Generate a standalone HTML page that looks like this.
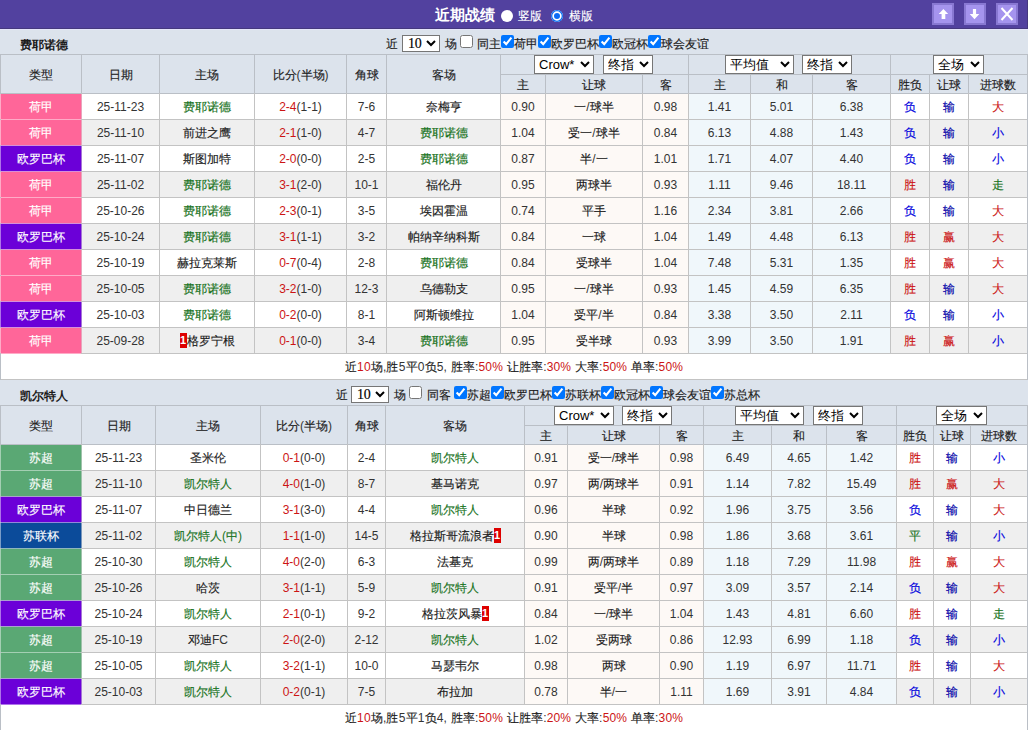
<!DOCTYPE html><html><head><meta charset="utf-8"><style>
html,body{margin:0;padding:0;}
body{width:1030px;height:730px;overflow:hidden;position:relative;background:#fff;font-family:"Liberation Sans",sans-serif;font-size:12px;color:#333;}
div{position:absolute;box-sizing:content-box;}
.t{text-align:center;white-space:nowrap;overflow:visible;color:#333;}
.t>.c{color:#1c1c1c;}
.t.w>.c{color:inherit;}
.c{-webkit-text-stroke-width:0.15px;}
.b .c{-webkit-text-stroke-width:0;}
.rc{display:inline-block;width:7px;height:15px;line-height:15px;vertical-align:top;margin-top:4px;background:#dd0000;color:#fff;font-weight:bold;font-size:11px;text-align:center;-webkit-text-stroke-width:0;}
select{position:absolute;margin:0;box-sizing:border-box;background:#fff;color:#000;}
.n10{font-family:"Liberation Serif",serif;font-size:14px;line-height:17px;height:17px;color:#000;letter-spacing:-0.2px;-webkit-text-stroke:0.15px #000;}
.s10{width:38px;height:17px;font-family:"Liberation Serif",serif;font-size:13px;padding:0 0 0 1px;letter-spacing:0.5px;-webkit-text-stroke:0.2px #000;}
.hs{height:19px;font-family:"Liberation Sans",sans-serif;font-size:13px;}
.btn{width:18px;height:18px;background:#a594ee;border:2px solid #8878d2;}
</style></head><body><div style="left:0px;top:0px;width:1027px;height:28px;background:#52419f;border-right:1px solid #45387e;border-bottom:1px solid #45387e"></div><div style="left:0px;top:29px;width:1028px;height:1px;background:#e4e4fa;"></div><div class="t b w" style="left:435px;top:0px;width:70px;height:29px;line-height:29px;color:#fff;font-weight:bold;font-size:15px;text-align:left"><span class="c">近期战绩</span></div><div class="t w" style="left:518px;top:2px;width:40px;height:29px;line-height:29px;color:#fff;text-align:left"><span class="c">竖版</span></div><div class="t w" style="left:569px;top:2px;width:40px;height:29px;line-height:29px;color:#fff;text-align:left"><span class="c">横版</span></div><div style="left:501px;top:10px;width:12px;height:12px;border-radius:50%;background:#fff"></div><div style="left:551px;top:10px;width:12px;height:12px;border-radius:50%;background:#0b6cf6;box-shadow:inset 0 0 0 1.3px #1270f0, inset 0 0 0 3px #fff"></div><div class="btn" style="left:932px;top:3px"><svg width="18" height="18" style="position:absolute;left:0;top:0"><path d="M9.4 3.9 L14.2 8.9 L11.3 8.9 L11.3 14 L7.6 14 L7.6 8.9 L4.7 8.9 Z" fill="#fff"/></svg></div><div class="btn" style="left:964px;top:3px"><svg width="18" height="18" style="position:absolute;left:0;top:0"><path d="M8.5 14.2 L13.3 9.1 L10.1 9.1 L10.1 3.9 L6.9 3.9 L6.9 9.1 L3.7 9.1 Z" fill="#fff"/></svg></div><div class="btn" style="left:996px;top:3px"><svg width="18" height="18" style="position:absolute;left:0;top:0"><path d="M3.5 3 L14.5 15 M14.5 3 L3.5 15" stroke="#fff" stroke-width="2" fill="none"/></svg></div><div style="left:0px;top:30px;width:1028px;height:349px;background:#dce3ec;"></div><div class="t b" style="left:20px;top:34px;width:100px;height:22px;line-height:22px;font-weight:bold;text-align:left;color:#222"><span class="c">费耶诺德</span></div><div class="t " style="left:386px;top:34px;width:16px;height:20px;line-height:20px;text-align:left"><span class="c">近</span></div><select class="s10" style="left:402px;top:35px"><option></option></select><div class="n10" style="left:408px;top:35px">10</div><div class="t " style="left:445px;top:34px;width:16px;height:20px;line-height:20px;text-align:left"><span class="c">场</span></div><input type="checkbox"  style="position:absolute;left:460px;top:35px;margin:0;width:13px;height:13px"><div class="t " style="left:477px;top:34px;width:28px;height:20px;line-height:20px;text-align:left"><span class="c">同主</span></div><input type="checkbox" checked style="position:absolute;left:501px;top:35px;margin:0;width:13px;height:13px"><div class="t " style="left:514px;top:34px;width:28px;height:20px;line-height:20px;text-align:left"><span class="c">荷甲</span></div><input type="checkbox" checked style="position:absolute;left:538px;top:35px;margin:0;width:13px;height:13px"><div class="t " style="left:551px;top:34px;width:52px;height:20px;line-height:20px;text-align:left"><span class="c">欧罗巴杯</span></div><input type="checkbox" checked style="position:absolute;left:599px;top:35px;margin:0;width:13px;height:13px"><div class="t " style="left:612px;top:34px;width:40px;height:20px;line-height:20px;text-align:left"><span class="c">欧冠杯</span></div><input type="checkbox" checked style="position:absolute;left:648px;top:35px;margin:0;width:13px;height:13px"><div class="t " style="left:661px;top:34px;width:52px;height:20px;line-height:20px;text-align:left"><span class="c">球会友谊</span></div><select class="hs" style="left:534px;top:55px;width:60px"><option>Crow*</option></select><select class="hs" style="left:603px;top:55px;width:50px"><option>终指</option></select><select class="hs" style="left:725px;top:55px;width:69px"><option>平均值</option></select><select class="hs" style="left:802px;top:55px;width:50px"><option>终指</option></select><select class="hs" style="left:933px;top:55px;width:51px"><option>全场</option></select><div style="left:1px;top:94px;width:1026px;height:25px;background:#ffffff;"></div><div style="left:1px;top:94px;width:80px;height:25px;background:#ff6699;"></div><div style="left:501px;top:94px;width:187px;height:25px;background:#fdf9f6;"></div><div style="left:689px;top:94px;width:201px;height:25px;background:#f0f7fb;"></div><div style="left:1px;top:120px;width:1026px;height:25px;background:#efefef;"></div><div style="left:1px;top:120px;width:80px;height:25px;background:#ff6699;"></div><div style="left:501px;top:120px;width:187px;height:25px;background:#fdf9f6;"></div><div style="left:689px;top:120px;width:201px;height:25px;background:#f0f7fb;"></div><div style="left:1px;top:146px;width:1026px;height:25px;background:#ffffff;"></div><div style="left:1px;top:146px;width:80px;height:25px;background:#6b00d8;"></div><div style="left:501px;top:146px;width:187px;height:25px;background:#fdf9f6;"></div><div style="left:689px;top:146px;width:201px;height:25px;background:#f0f7fb;"></div><div style="left:1px;top:172px;width:1026px;height:25px;background:#efefef;"></div><div style="left:1px;top:172px;width:80px;height:25px;background:#ff6699;"></div><div style="left:501px;top:172px;width:187px;height:25px;background:#fdf9f6;"></div><div style="left:689px;top:172px;width:201px;height:25px;background:#f0f7fb;"></div><div style="left:1px;top:198px;width:1026px;height:25px;background:#ffffff;"></div><div style="left:1px;top:198px;width:80px;height:25px;background:#ff6699;"></div><div style="left:501px;top:198px;width:187px;height:25px;background:#fdf9f6;"></div><div style="left:689px;top:198px;width:201px;height:25px;background:#f0f7fb;"></div><div style="left:1px;top:224px;width:1026px;height:25px;background:#efefef;"></div><div style="left:1px;top:224px;width:80px;height:25px;background:#6b00d8;"></div><div style="left:501px;top:224px;width:187px;height:25px;background:#fdf9f6;"></div><div style="left:689px;top:224px;width:201px;height:25px;background:#f0f7fb;"></div><div style="left:1px;top:250px;width:1026px;height:25px;background:#ffffff;"></div><div style="left:1px;top:250px;width:80px;height:25px;background:#ff6699;"></div><div style="left:501px;top:250px;width:187px;height:25px;background:#fdf9f6;"></div><div style="left:689px;top:250px;width:201px;height:25px;background:#f0f7fb;"></div><div style="left:1px;top:276px;width:1026px;height:25px;background:#efefef;"></div><div style="left:1px;top:276px;width:80px;height:25px;background:#ff6699;"></div><div style="left:501px;top:276px;width:187px;height:25px;background:#fdf9f6;"></div><div style="left:689px;top:276px;width:201px;height:25px;background:#f0f7fb;"></div><div style="left:1px;top:302px;width:1026px;height:25px;background:#ffffff;"></div><div style="left:1px;top:302px;width:80px;height:25px;background:#6b00d8;"></div><div style="left:501px;top:302px;width:187px;height:25px;background:#fdf9f6;"></div><div style="left:689px;top:302px;width:201px;height:25px;background:#f0f7fb;"></div><div style="left:1px;top:328px;width:1026px;height:25px;background:#efefef;"></div><div style="left:1px;top:328px;width:80px;height:25px;background:#ff6699;"></div><div style="left:501px;top:328px;width:187px;height:25px;background:#fdf9f6;"></div><div style="left:689px;top:328px;width:201px;height:25px;background:#f0f7fb;"></div><div style="left:1px;top:354px;width:1026px;height:25px;background:#ffffff;"></div><div style="left:0px;top:54px;width:1028px;height:1px;background:#babfc6;"></div><div style="left:500px;top:74px;width:528px;height:1px;background:#babfc6;"></div><div style="left:0px;top:93px;width:1028px;height:1px;background:#babfc6;"></div><div style="left:0px;top:119px;width:1028px;height:1px;background:#c3c3c3;"></div><div style="left:0px;top:145px;width:1028px;height:1px;background:#c3c3c3;"></div><div style="left:0px;top:171px;width:1028px;height:1px;background:#c3c3c3;"></div><div style="left:0px;top:197px;width:1028px;height:1px;background:#c3c3c3;"></div><div style="left:0px;top:223px;width:1028px;height:1px;background:#c3c3c3;"></div><div style="left:0px;top:249px;width:1028px;height:1px;background:#c3c3c3;"></div><div style="left:0px;top:275px;width:1028px;height:1px;background:#c3c3c3;"></div><div style="left:0px;top:301px;width:1028px;height:1px;background:#c3c3c3;"></div><div style="left:0px;top:327px;width:1028px;height:1px;background:#c3c3c3;"></div><div style="left:0px;top:353px;width:1028px;height:1px;background:#c3c3c3;"></div><div style="left:0px;top:379px;width:1028px;height:1px;background:#c3c3c3;"></div><div style="left:0px;top:54px;width:1px;height:326px;background:#babfc6;"></div><div style="left:81px;top:54px;width:1px;height:40px;background:#babfc6;"></div><div style="left:81px;top:93px;width:1px;height:261px;background:#c3c3c3;"></div><div style="left:159px;top:54px;width:1px;height:40px;background:#babfc6;"></div><div style="left:159px;top:93px;width:1px;height:261px;background:#c3c3c3;"></div><div style="left:254px;top:54px;width:1px;height:40px;background:#babfc6;"></div><div style="left:254px;top:93px;width:1px;height:261px;background:#c3c3c3;"></div><div style="left:346px;top:54px;width:1px;height:40px;background:#babfc6;"></div><div style="left:346px;top:93px;width:1px;height:261px;background:#c3c3c3;"></div><div style="left:386px;top:54px;width:1px;height:40px;background:#babfc6;"></div><div style="left:386px;top:93px;width:1px;height:261px;background:#c3c3c3;"></div><div style="left:500px;top:54px;width:1px;height:40px;background:#babfc6;"></div><div style="left:500px;top:93px;width:1px;height:261px;background:#c3c3c3;"></div><div style="left:545px;top:74px;width:1px;height:20px;background:#babfc6;"></div><div style="left:545px;top:93px;width:1px;height:261px;background:#c3c3c3;"></div><div style="left:642px;top:74px;width:1px;height:20px;background:#babfc6;"></div><div style="left:642px;top:93px;width:1px;height:261px;background:#c3c3c3;"></div><div style="left:688px;top:54px;width:1px;height:40px;background:#babfc6;"></div><div style="left:688px;top:93px;width:1px;height:261px;background:#c3c3c3;"></div><div style="left:750px;top:74px;width:1px;height:20px;background:#babfc6;"></div><div style="left:750px;top:93px;width:1px;height:261px;background:#c3c3c3;"></div><div style="left:812px;top:74px;width:1px;height:20px;background:#babfc6;"></div><div style="left:812px;top:93px;width:1px;height:261px;background:#c3c3c3;"></div><div style="left:890px;top:54px;width:1px;height:40px;background:#babfc6;"></div><div style="left:890px;top:93px;width:1px;height:261px;background:#c3c3c3;"></div><div style="left:929px;top:74px;width:1px;height:20px;background:#babfc6;"></div><div style="left:929px;top:93px;width:1px;height:261px;background:#c3c3c3;"></div><div style="left:968px;top:74px;width:1px;height:20px;background:#babfc6;"></div><div style="left:968px;top:93px;width:1px;height:261px;background:#c3c3c3;"></div><div style="left:1027px;top:54px;width:1px;height:326px;background:#babfc6;"></div><div style="left:0px;top:94px;width:1px;height:25px;background:#ffabc7;"></div><div style="left:81px;top:94px;width:1px;height:25px;background:#e9a4bb;"></div><div style="left:0px;top:120px;width:1px;height:25px;background:#ffabc7;"></div><div style="left:81px;top:120px;width:1px;height:25px;background:#e9a4bb;"></div><div style="left:1px;top:119px;width:80px;height:1px;background:#ffabc7;"></div><div style="left:0px;top:146px;width:1px;height:25px;background:#ae73ea;"></div><div style="left:81px;top:146px;width:1px;height:25px;background:#a676d7;"></div><div style="left:1px;top:145px;width:80px;height:1px;background:#d68fd8;"></div><div style="left:0px;top:172px;width:1px;height:25px;background:#ffabc7;"></div><div style="left:81px;top:172px;width:1px;height:25px;background:#e9a4bb;"></div><div style="left:1px;top:171px;width:80px;height:1px;background:#d68fd8;"></div><div style="left:0px;top:198px;width:1px;height:25px;background:#ffabc7;"></div><div style="left:81px;top:198px;width:1px;height:25px;background:#e9a4bb;"></div><div style="left:1px;top:197px;width:80px;height:1px;background:#ffabc7;"></div><div style="left:0px;top:224px;width:1px;height:25px;background:#ae73ea;"></div><div style="left:81px;top:224px;width:1px;height:25px;background:#a676d7;"></div><div style="left:1px;top:223px;width:80px;height:1px;background:#d68fd8;"></div><div style="left:0px;top:250px;width:1px;height:25px;background:#ffabc7;"></div><div style="left:81px;top:250px;width:1px;height:25px;background:#e9a4bb;"></div><div style="left:1px;top:249px;width:80px;height:1px;background:#d68fd8;"></div><div style="left:0px;top:276px;width:1px;height:25px;background:#ffabc7;"></div><div style="left:81px;top:276px;width:1px;height:25px;background:#e9a4bb;"></div><div style="left:1px;top:275px;width:80px;height:1px;background:#ffabc7;"></div><div style="left:0px;top:302px;width:1px;height:25px;background:#ae73ea;"></div><div style="left:81px;top:302px;width:1px;height:25px;background:#a676d7;"></div><div style="left:1px;top:301px;width:80px;height:1px;background:#d68fd8;"></div><div style="left:0px;top:328px;width:1px;height:25px;background:#ffabc7;"></div><div style="left:81px;top:328px;width:1px;height:25px;background:#e9a4bb;"></div><div style="left:1px;top:327px;width:80px;height:1px;background:#d68fd8;"></div><div style="left:1px;top:353px;width:80px;height:1px;background:#ffabc7;"></div><div class="t " style="left:1px;top:56px;width:80px;height:38px;line-height:38px;"><span class="c">类型</span></div><div class="t " style="left:82px;top:56px;width:77px;height:38px;line-height:38px;"><span class="c">日期</span></div><div class="t " style="left:160px;top:56px;width:94px;height:38px;line-height:38px;"><span class="c">主场</span></div><div class="t " style="left:255px;top:56px;width:91px;height:38px;line-height:38px;"><span class="c">比分</span>(<span class="c">半场</span>)</div><div class="t " style="left:347px;top:56px;width:39px;height:38px;line-height:38px;"><span class="c">角球</span></div><div class="t " style="left:387px;top:56px;width:113px;height:38px;line-height:38px;"><span class="c">客场</span></div><div class="t " style="left:501px;top:76px;width:44px;height:18px;line-height:18px;"><span class="c">主</span></div><div class="t " style="left:546px;top:76px;width:96px;height:18px;line-height:18px;"><span class="c">让球</span></div><div class="t " style="left:643px;top:76px;width:45px;height:18px;line-height:18px;"><span class="c">客</span></div><div class="t " style="left:689px;top:76px;width:61px;height:18px;line-height:18px;"><span class="c">主</span></div><div class="t " style="left:751px;top:76px;width:61px;height:18px;line-height:18px;"><span class="c">和</span></div><div class="t " style="left:813px;top:76px;width:77px;height:18px;line-height:18px;"><span class="c">客</span></div><div class="t " style="left:891px;top:76px;width:38px;height:18px;line-height:18px;"><span class="c">胜负</span></div><div class="t " style="left:930px;top:76px;width:38px;height:18px;line-height:18px;"><span class="c">让球</span></div><div class="t " style="left:969px;top:76px;width:58px;height:18px;line-height:18px;"><span class="c">进球数</span></div><div class="t w" style="left:1px;top:95px;width:80px;height:25px;line-height:25px;color:#fff"><span class="c">荷甲</span></div><div class="t " style="left:82px;top:95px;width:77px;height:25px;line-height:25px;">25-11-23</div><div class="t " style="left:160px;top:95px;width:94px;height:25px;line-height:25px;"><span style="color:#18731d"><span class="c">费耶诺德</span></span></div><div class="t " style="left:255px;top:95px;width:91px;height:25px;line-height:25px;"><span style="color:#cc1414">2-4</span>(1-1)</div><div class="t " style="left:347px;top:95px;width:39px;height:25px;line-height:25px;">7-6</div><div class="t " style="left:387px;top:95px;width:113px;height:25px;line-height:25px;"><span class="c">奈梅亨</span></div><div class="t " style="left:501px;top:95px;width:44px;height:25px;line-height:25px;">0.90</div><div class="t " style="left:546px;top:95px;width:96px;height:25px;line-height:25px;"><span class="c">一</span>/<span class="c">球半</span></div><div class="t " style="left:643px;top:95px;width:45px;height:25px;line-height:25px;">0.98</div><div class="t " style="left:689px;top:95px;width:61px;height:25px;line-height:25px;">1.41</div><div class="t " style="left:751px;top:95px;width:61px;height:25px;line-height:25px;">5.01</div><div class="t " style="left:813px;top:95px;width:77px;height:25px;line-height:25px;">6.38</div><div class="t " style="left:891px;top:95px;width:38px;height:25px;line-height:25px;"><span style="color:#0000dd"><span class="c">负</span></span></div><div class="t " style="left:930px;top:95px;width:38px;height:25px;line-height:25px;"><span style="color:#0000a8"><span class="c">输</span></span></div><div class="t " style="left:969px;top:95px;width:58px;height:25px;line-height:25px;"><span style="color:#cc1414"><span class="c">大</span></span></div><div class="t w" style="left:1px;top:121px;width:80px;height:25px;line-height:25px;color:#fff"><span class="c">荷甲</span></div><div class="t " style="left:82px;top:121px;width:77px;height:25px;line-height:25px;">25-11-10</div><div class="t " style="left:160px;top:121px;width:94px;height:25px;line-height:25px;"><span class="c">前进之鹰</span></div><div class="t " style="left:255px;top:121px;width:91px;height:25px;line-height:25px;"><span style="color:#cc1414">2-1</span>(1-0)</div><div class="t " style="left:347px;top:121px;width:39px;height:25px;line-height:25px;">4-7</div><div class="t " style="left:387px;top:121px;width:113px;height:25px;line-height:25px;"><span style="color:#18731d"><span class="c">费耶诺德</span></span></div><div class="t " style="left:501px;top:121px;width:44px;height:25px;line-height:25px;">1.04</div><div class="t " style="left:546px;top:121px;width:96px;height:25px;line-height:25px;"><span class="c">受一</span>/<span class="c">球半</span></div><div class="t " style="left:643px;top:121px;width:45px;height:25px;line-height:25px;">0.84</div><div class="t " style="left:689px;top:121px;width:61px;height:25px;line-height:25px;">6.13</div><div class="t " style="left:751px;top:121px;width:61px;height:25px;line-height:25px;">4.88</div><div class="t " style="left:813px;top:121px;width:77px;height:25px;line-height:25px;">1.43</div><div class="t " style="left:891px;top:121px;width:38px;height:25px;line-height:25px;"><span style="color:#0000dd"><span class="c">负</span></span></div><div class="t " style="left:930px;top:121px;width:38px;height:25px;line-height:25px;"><span style="color:#0000a8"><span class="c">输</span></span></div><div class="t " style="left:969px;top:121px;width:58px;height:25px;line-height:25px;"><span style="color:#0000dd"><span class="c">小</span></span></div><div class="t w" style="left:1px;top:147px;width:80px;height:25px;line-height:25px;color:#fff"><span class="c">欧罗巴杯</span></div><div class="t " style="left:82px;top:147px;width:77px;height:25px;line-height:25px;">25-11-07</div><div class="t " style="left:160px;top:147px;width:94px;height:25px;line-height:25px;"><span class="c">斯图加特</span></div><div class="t " style="left:255px;top:147px;width:91px;height:25px;line-height:25px;"><span style="color:#cc1414">2-0</span>(0-0)</div><div class="t " style="left:347px;top:147px;width:39px;height:25px;line-height:25px;">2-5</div><div class="t " style="left:387px;top:147px;width:113px;height:25px;line-height:25px;"><span style="color:#18731d"><span class="c">费耶诺德</span></span></div><div class="t " style="left:501px;top:147px;width:44px;height:25px;line-height:25px;">0.87</div><div class="t " style="left:546px;top:147px;width:96px;height:25px;line-height:25px;"><span class="c">半</span>/<span class="c">一</span></div><div class="t " style="left:643px;top:147px;width:45px;height:25px;line-height:25px;">1.01</div><div class="t " style="left:689px;top:147px;width:61px;height:25px;line-height:25px;">1.71</div><div class="t " style="left:751px;top:147px;width:61px;height:25px;line-height:25px;">4.07</div><div class="t " style="left:813px;top:147px;width:77px;height:25px;line-height:25px;">4.40</div><div class="t " style="left:891px;top:147px;width:38px;height:25px;line-height:25px;"><span style="color:#0000dd"><span class="c">负</span></span></div><div class="t " style="left:930px;top:147px;width:38px;height:25px;line-height:25px;"><span style="color:#0000a8"><span class="c">输</span></span></div><div class="t " style="left:969px;top:147px;width:58px;height:25px;line-height:25px;"><span style="color:#0000dd"><span class="c">小</span></span></div><div class="t w" style="left:1px;top:173px;width:80px;height:25px;line-height:25px;color:#fff"><span class="c">荷甲</span></div><div class="t " style="left:82px;top:173px;width:77px;height:25px;line-height:25px;">25-11-02</div><div class="t " style="left:160px;top:173px;width:94px;height:25px;line-height:25px;"><span style="color:#18731d"><span class="c">费耶诺德</span></span></div><div class="t " style="left:255px;top:173px;width:91px;height:25px;line-height:25px;"><span style="color:#cc1414">3-1</span>(2-0)</div><div class="t " style="left:347px;top:173px;width:39px;height:25px;line-height:25px;">10-1</div><div class="t " style="left:387px;top:173px;width:113px;height:25px;line-height:25px;"><span class="c">福伦丹</span></div><div class="t " style="left:501px;top:173px;width:44px;height:25px;line-height:25px;">0.95</div><div class="t " style="left:546px;top:173px;width:96px;height:25px;line-height:25px;"><span class="c">两球半</span></div><div class="t " style="left:643px;top:173px;width:45px;height:25px;line-height:25px;">0.93</div><div class="t " style="left:689px;top:173px;width:61px;height:25px;line-height:25px;">1.11</div><div class="t " style="left:751px;top:173px;width:61px;height:25px;line-height:25px;">9.46</div><div class="t " style="left:813px;top:173px;width:77px;height:25px;line-height:25px;">18.11</div><div class="t " style="left:891px;top:173px;width:38px;height:25px;line-height:25px;"><span style="color:#cc1414"><span class="c">胜</span></span></div><div class="t " style="left:930px;top:173px;width:38px;height:25px;line-height:25px;"><span style="color:#0000a8"><span class="c">输</span></span></div><div class="t " style="left:969px;top:173px;width:58px;height:25px;line-height:25px;"><span style="color:#18731d"><span class="c">走</span></span></div><div class="t w" style="left:1px;top:199px;width:80px;height:25px;line-height:25px;color:#fff"><span class="c">荷甲</span></div><div class="t " style="left:82px;top:199px;width:77px;height:25px;line-height:25px;">25-10-26</div><div class="t " style="left:160px;top:199px;width:94px;height:25px;line-height:25px;"><span style="color:#18731d"><span class="c">费耶诺德</span></span></div><div class="t " style="left:255px;top:199px;width:91px;height:25px;line-height:25px;"><span style="color:#cc1414">2-3</span>(0-1)</div><div class="t " style="left:347px;top:199px;width:39px;height:25px;line-height:25px;">3-5</div><div class="t " style="left:387px;top:199px;width:113px;height:25px;line-height:25px;"><span class="c">埃因霍温</span></div><div class="t " style="left:501px;top:199px;width:44px;height:25px;line-height:25px;">0.74</div><div class="t " style="left:546px;top:199px;width:96px;height:25px;line-height:25px;"><span class="c">平手</span></div><div class="t " style="left:643px;top:199px;width:45px;height:25px;line-height:25px;">1.16</div><div class="t " style="left:689px;top:199px;width:61px;height:25px;line-height:25px;">2.34</div><div class="t " style="left:751px;top:199px;width:61px;height:25px;line-height:25px;">3.81</div><div class="t " style="left:813px;top:199px;width:77px;height:25px;line-height:25px;">2.66</div><div class="t " style="left:891px;top:199px;width:38px;height:25px;line-height:25px;"><span style="color:#0000dd"><span class="c">负</span></span></div><div class="t " style="left:930px;top:199px;width:38px;height:25px;line-height:25px;"><span style="color:#0000a8"><span class="c">输</span></span></div><div class="t " style="left:969px;top:199px;width:58px;height:25px;line-height:25px;"><span style="color:#cc1414"><span class="c">大</span></span></div><div class="t w" style="left:1px;top:225px;width:80px;height:25px;line-height:25px;color:#fff"><span class="c">欧罗巴杯</span></div><div class="t " style="left:82px;top:225px;width:77px;height:25px;line-height:25px;">25-10-24</div><div class="t " style="left:160px;top:225px;width:94px;height:25px;line-height:25px;"><span style="color:#18731d"><span class="c">费耶诺德</span></span></div><div class="t " style="left:255px;top:225px;width:91px;height:25px;line-height:25px;"><span style="color:#cc1414">3-1</span>(1-1)</div><div class="t " style="left:347px;top:225px;width:39px;height:25px;line-height:25px;">3-2</div><div class="t " style="left:387px;top:225px;width:113px;height:25px;line-height:25px;"><span class="c">帕纳辛纳科斯</span></div><div class="t " style="left:501px;top:225px;width:44px;height:25px;line-height:25px;">0.84</div><div class="t " style="left:546px;top:225px;width:96px;height:25px;line-height:25px;"><span class="c">一球</span></div><div class="t " style="left:643px;top:225px;width:45px;height:25px;line-height:25px;">1.04</div><div class="t " style="left:689px;top:225px;width:61px;height:25px;line-height:25px;">1.49</div><div class="t " style="left:751px;top:225px;width:61px;height:25px;line-height:25px;">4.48</div><div class="t " style="left:813px;top:225px;width:77px;height:25px;line-height:25px;">6.13</div><div class="t " style="left:891px;top:225px;width:38px;height:25px;line-height:25px;"><span style="color:#cc1414"><span class="c">胜</span></span></div><div class="t " style="left:930px;top:225px;width:38px;height:25px;line-height:25px;"><span style="color:#cc1414"><span class="c">赢</span></span></div><div class="t " style="left:969px;top:225px;width:58px;height:25px;line-height:25px;"><span style="color:#cc1414"><span class="c">大</span></span></div><div class="t w" style="left:1px;top:251px;width:80px;height:25px;line-height:25px;color:#fff"><span class="c">荷甲</span></div><div class="t " style="left:82px;top:251px;width:77px;height:25px;line-height:25px;">25-10-19</div><div class="t " style="left:160px;top:251px;width:94px;height:25px;line-height:25px;"><span class="c">赫拉克莱斯</span></div><div class="t " style="left:255px;top:251px;width:91px;height:25px;line-height:25px;"><span style="color:#cc1414">0-7</span>(0-4)</div><div class="t " style="left:347px;top:251px;width:39px;height:25px;line-height:25px;">2-8</div><div class="t " style="left:387px;top:251px;width:113px;height:25px;line-height:25px;"><span style="color:#18731d"><span class="c">费耶诺德</span></span></div><div class="t " style="left:501px;top:251px;width:44px;height:25px;line-height:25px;">0.84</div><div class="t " style="left:546px;top:251px;width:96px;height:25px;line-height:25px;"><span class="c">受球半</span></div><div class="t " style="left:643px;top:251px;width:45px;height:25px;line-height:25px;">1.04</div><div class="t " style="left:689px;top:251px;width:61px;height:25px;line-height:25px;">7.48</div><div class="t " style="left:751px;top:251px;width:61px;height:25px;line-height:25px;">5.31</div><div class="t " style="left:813px;top:251px;width:77px;height:25px;line-height:25px;">1.35</div><div class="t " style="left:891px;top:251px;width:38px;height:25px;line-height:25px;"><span style="color:#cc1414"><span class="c">胜</span></span></div><div class="t " style="left:930px;top:251px;width:38px;height:25px;line-height:25px;"><span style="color:#cc1414"><span class="c">赢</span></span></div><div class="t " style="left:969px;top:251px;width:58px;height:25px;line-height:25px;"><span style="color:#cc1414"><span class="c">大</span></span></div><div class="t w" style="left:1px;top:277px;width:80px;height:25px;line-height:25px;color:#fff"><span class="c">荷甲</span></div><div class="t " style="left:82px;top:277px;width:77px;height:25px;line-height:25px;">25-10-05</div><div class="t " style="left:160px;top:277px;width:94px;height:25px;line-height:25px;"><span style="color:#18731d"><span class="c">费耶诺德</span></span></div><div class="t " style="left:255px;top:277px;width:91px;height:25px;line-height:25px;"><span style="color:#cc1414">3-2</span>(1-0)</div><div class="t " style="left:347px;top:277px;width:39px;height:25px;line-height:25px;">12-3</div><div class="t " style="left:387px;top:277px;width:113px;height:25px;line-height:25px;"><span class="c">乌德勒支</span></div><div class="t " style="left:501px;top:277px;width:44px;height:25px;line-height:25px;">0.95</div><div class="t " style="left:546px;top:277px;width:96px;height:25px;line-height:25px;"><span class="c">一</span>/<span class="c">球半</span></div><div class="t " style="left:643px;top:277px;width:45px;height:25px;line-height:25px;">0.93</div><div class="t " style="left:689px;top:277px;width:61px;height:25px;line-height:25px;">1.45</div><div class="t " style="left:751px;top:277px;width:61px;height:25px;line-height:25px;">4.59</div><div class="t " style="left:813px;top:277px;width:77px;height:25px;line-height:25px;">6.35</div><div class="t " style="left:891px;top:277px;width:38px;height:25px;line-height:25px;"><span style="color:#cc1414"><span class="c">胜</span></span></div><div class="t " style="left:930px;top:277px;width:38px;height:25px;line-height:25px;"><span style="color:#0000a8"><span class="c">输</span></span></div><div class="t " style="left:969px;top:277px;width:58px;height:25px;line-height:25px;"><span style="color:#cc1414"><span class="c">大</span></span></div><div class="t w" style="left:1px;top:303px;width:80px;height:25px;line-height:25px;color:#fff"><span class="c">欧罗巴杯</span></div><div class="t " style="left:82px;top:303px;width:77px;height:25px;line-height:25px;">25-10-03</div><div class="t " style="left:160px;top:303px;width:94px;height:25px;line-height:25px;"><span style="color:#18731d"><span class="c">费耶诺德</span></span></div><div class="t " style="left:255px;top:303px;width:91px;height:25px;line-height:25px;"><span style="color:#cc1414">0-2</span>(0-0)</div><div class="t " style="left:347px;top:303px;width:39px;height:25px;line-height:25px;">8-1</div><div class="t " style="left:387px;top:303px;width:113px;height:25px;line-height:25px;"><span class="c">阿斯顿维拉</span></div><div class="t " style="left:501px;top:303px;width:44px;height:25px;line-height:25px;">1.04</div><div class="t " style="left:546px;top:303px;width:96px;height:25px;line-height:25px;"><span class="c">受平</span>/<span class="c">半</span></div><div class="t " style="left:643px;top:303px;width:45px;height:25px;line-height:25px;">0.84</div><div class="t " style="left:689px;top:303px;width:61px;height:25px;line-height:25px;">3.38</div><div class="t " style="left:751px;top:303px;width:61px;height:25px;line-height:25px;">3.50</div><div class="t " style="left:813px;top:303px;width:77px;height:25px;line-height:25px;">2.11</div><div class="t " style="left:891px;top:303px;width:38px;height:25px;line-height:25px;"><span style="color:#0000dd"><span class="c">负</span></span></div><div class="t " style="left:930px;top:303px;width:38px;height:25px;line-height:25px;"><span style="color:#0000a8"><span class="c">输</span></span></div><div class="t " style="left:969px;top:303px;width:58px;height:25px;line-height:25px;"><span style="color:#0000dd"><span class="c">小</span></span></div><div class="t w" style="left:1px;top:329px;width:80px;height:25px;line-height:25px;color:#fff"><span class="c">荷甲</span></div><div class="t " style="left:82px;top:329px;width:77px;height:25px;line-height:25px;">25-09-28</div><div class="t " style="left:160px;top:329px;width:94px;height:25px;line-height:25px;"><span class="rc">1</span><span class="c">格罗宁根</span></div><div class="t " style="left:255px;top:329px;width:91px;height:25px;line-height:25px;"><span style="color:#cc1414">0-1</span>(0-0)</div><div class="t " style="left:347px;top:329px;width:39px;height:25px;line-height:25px;">3-4</div><div class="t " style="left:387px;top:329px;width:113px;height:25px;line-height:25px;"><span style="color:#18731d"><span class="c">费耶诺德</span></span></div><div class="t " style="left:501px;top:329px;width:44px;height:25px;line-height:25px;">0.95</div><div class="t " style="left:546px;top:329px;width:96px;height:25px;line-height:25px;"><span class="c">受半球</span></div><div class="t " style="left:643px;top:329px;width:45px;height:25px;line-height:25px;">0.93</div><div class="t " style="left:689px;top:329px;width:61px;height:25px;line-height:25px;">3.99</div><div class="t " style="left:751px;top:329px;width:61px;height:25px;line-height:25px;">3.50</div><div class="t " style="left:813px;top:329px;width:77px;height:25px;line-height:25px;">1.91</div><div class="t " style="left:891px;top:329px;width:38px;height:25px;line-height:25px;"><span style="color:#cc1414"><span class="c">胜</span></span></div><div class="t " style="left:930px;top:329px;width:38px;height:25px;line-height:25px;"><span style="color:#cc1414"><span class="c">赢</span></span></div><div class="t " style="left:969px;top:329px;width:58px;height:25px;line-height:25px;"><span style="color:#0000dd"><span class="c">小</span></span></div><div class="t " style="left:1px;top:355px;width:1026px;height:25px;line-height:25px;letter-spacing:0.18px"><span class="c">近</span><span style="color:#cc1414">10</span><span class="c">场</span>,<span class="c">胜</span>5<span class="c">平</span>0<span class="c">负</span>5, <span class="c">胜率</span>:<span style="color:#cc1414">50%</span> <span class="c">让胜率</span>:<span style="color:#cc1414">30%</span> <span class="c">大率</span>:<span style="color:#cc1414">50%</span> <span class="c">单率</span>:<span style="color:#cc1414">50%</span></div><div style="left:0px;top:380px;width:1028px;height:350px;background:#dce3ec;"></div><div class="t b" style="left:20px;top:385px;width:100px;height:22px;line-height:22px;font-weight:bold;text-align:left;color:#222"><span class="c">凯尔特人</span></div><div class="t " style="left:336px;top:385px;width:16px;height:20px;line-height:20px;text-align:left"><span class="c">近</span></div><select class="s10" style="left:351px;top:386px"><option></option></select><div class="n10" style="left:357px;top:386px">10</div><div class="t " style="left:394px;top:385px;width:16px;height:20px;line-height:20px;text-align:left"><span class="c">场</span></div><input type="checkbox"  style="position:absolute;left:409px;top:386px;margin:0;width:13px;height:13px"><div class="t " style="left:427px;top:385px;width:28px;height:20px;line-height:20px;text-align:left"><span class="c">同客</span></div><input type="checkbox" checked style="position:absolute;left:454px;top:386px;margin:0;width:13px;height:13px"><div class="t " style="left:467px;top:385px;width:28px;height:20px;line-height:20px;text-align:left"><span class="c">苏超</span></div><input type="checkbox" checked style="position:absolute;left:491px;top:386px;margin:0;width:13px;height:13px"><div class="t " style="left:504px;top:385px;width:52px;height:20px;line-height:20px;text-align:left"><span class="c">欧罗巴杯</span></div><input type="checkbox" checked style="position:absolute;left:552px;top:386px;margin:0;width:13px;height:13px"><div class="t " style="left:565px;top:385px;width:40px;height:20px;line-height:20px;text-align:left"><span class="c">苏联杯</span></div><input type="checkbox" checked style="position:absolute;left:601px;top:386px;margin:0;width:13px;height:13px"><div class="t " style="left:614px;top:385px;width:40px;height:20px;line-height:20px;text-align:left"><span class="c">欧冠杯</span></div><input type="checkbox" checked style="position:absolute;left:650px;top:386px;margin:0;width:13px;height:13px"><div class="t " style="left:663px;top:385px;width:52px;height:20px;line-height:20px;text-align:left"><span class="c">球会友谊</span></div><input type="checkbox" checked style="position:absolute;left:711px;top:386px;margin:0;width:13px;height:13px"><div class="t " style="left:724px;top:385px;width:40px;height:20px;line-height:20px;text-align:left"><span class="c">苏总杯</span></div><select class="hs" style="left:554px;top:406px;width:60px"><option>Crow*</option></select><select class="hs" style="left:622px;top:406px;width:50px"><option>终指</option></select><select class="hs" style="left:735px;top:406px;width:69px"><option>平均值</option></select><select class="hs" style="left:813px;top:406px;width:50px"><option>终指</option></select><select class="hs" style="left:936px;top:406px;width:51px"><option>全场</option></select><div style="left:1px;top:445px;width:1026px;height:25px;background:#ffffff;"></div><div style="left:1px;top:445px;width:80px;height:25px;background:#5aa874;"></div><div style="left:525px;top:445px;width:178px;height:25px;background:#fdf9f6;"></div><div style="left:704px;top:445px;width:192px;height:25px;background:#f0f7fb;"></div><div style="left:1px;top:471px;width:1026px;height:25px;background:#efefef;"></div><div style="left:1px;top:471px;width:80px;height:25px;background:#5aa874;"></div><div style="left:525px;top:471px;width:178px;height:25px;background:#fdf9f6;"></div><div style="left:704px;top:471px;width:192px;height:25px;background:#f0f7fb;"></div><div style="left:1px;top:497px;width:1026px;height:25px;background:#ffffff;"></div><div style="left:1px;top:497px;width:80px;height:25px;background:#6b00d8;"></div><div style="left:525px;top:497px;width:178px;height:25px;background:#fdf9f6;"></div><div style="left:704px;top:497px;width:192px;height:25px;background:#f0f7fb;"></div><div style="left:1px;top:523px;width:1026px;height:25px;background:#efefef;"></div><div style="left:1px;top:523px;width:80px;height:25px;background:#0b4b9a;"></div><div style="left:525px;top:523px;width:178px;height:25px;background:#fdf9f6;"></div><div style="left:704px;top:523px;width:192px;height:25px;background:#f0f7fb;"></div><div style="left:1px;top:549px;width:1026px;height:25px;background:#ffffff;"></div><div style="left:1px;top:549px;width:80px;height:25px;background:#5aa874;"></div><div style="left:525px;top:549px;width:178px;height:25px;background:#fdf9f6;"></div><div style="left:704px;top:549px;width:192px;height:25px;background:#f0f7fb;"></div><div style="left:1px;top:575px;width:1026px;height:25px;background:#efefef;"></div><div style="left:1px;top:575px;width:80px;height:25px;background:#5aa874;"></div><div style="left:525px;top:575px;width:178px;height:25px;background:#fdf9f6;"></div><div style="left:704px;top:575px;width:192px;height:25px;background:#f0f7fb;"></div><div style="left:1px;top:601px;width:1026px;height:25px;background:#ffffff;"></div><div style="left:1px;top:601px;width:80px;height:25px;background:#6b00d8;"></div><div style="left:525px;top:601px;width:178px;height:25px;background:#fdf9f6;"></div><div style="left:704px;top:601px;width:192px;height:25px;background:#f0f7fb;"></div><div style="left:1px;top:627px;width:1026px;height:25px;background:#efefef;"></div><div style="left:1px;top:627px;width:80px;height:25px;background:#5aa874;"></div><div style="left:525px;top:627px;width:178px;height:25px;background:#fdf9f6;"></div><div style="left:704px;top:627px;width:192px;height:25px;background:#f0f7fb;"></div><div style="left:1px;top:653px;width:1026px;height:25px;background:#ffffff;"></div><div style="left:1px;top:653px;width:80px;height:25px;background:#5aa874;"></div><div style="left:525px;top:653px;width:178px;height:25px;background:#fdf9f6;"></div><div style="left:704px;top:653px;width:192px;height:25px;background:#f0f7fb;"></div><div style="left:1px;top:679px;width:1026px;height:25px;background:#efefef;"></div><div style="left:1px;top:679px;width:80px;height:25px;background:#6b00d8;"></div><div style="left:525px;top:679px;width:178px;height:25px;background:#fdf9f6;"></div><div style="left:704px;top:679px;width:192px;height:25px;background:#f0f7fb;"></div><div style="left:1px;top:705px;width:1026px;height:25px;background:#ffffff;"></div><div style="left:0px;top:405px;width:1028px;height:1px;background:#babfc6;"></div><div style="left:524px;top:425px;width:504px;height:1px;background:#babfc6;"></div><div style="left:0px;top:444px;width:1028px;height:1px;background:#babfc6;"></div><div style="left:0px;top:470px;width:1028px;height:1px;background:#c3c3c3;"></div><div style="left:0px;top:496px;width:1028px;height:1px;background:#c3c3c3;"></div><div style="left:0px;top:522px;width:1028px;height:1px;background:#c3c3c3;"></div><div style="left:0px;top:548px;width:1028px;height:1px;background:#c3c3c3;"></div><div style="left:0px;top:574px;width:1028px;height:1px;background:#c3c3c3;"></div><div style="left:0px;top:600px;width:1028px;height:1px;background:#c3c3c3;"></div><div style="left:0px;top:626px;width:1028px;height:1px;background:#c3c3c3;"></div><div style="left:0px;top:652px;width:1028px;height:1px;background:#c3c3c3;"></div><div style="left:0px;top:678px;width:1028px;height:1px;background:#c3c3c3;"></div><div style="left:0px;top:704px;width:1028px;height:1px;background:#c3c3c3;"></div><div style="left:0px;top:405px;width:1px;height:325px;background:#babfc6;"></div><div style="left:81px;top:405px;width:1px;height:40px;background:#babfc6;"></div><div style="left:81px;top:444px;width:1px;height:261px;background:#c3c3c3;"></div><div style="left:155px;top:405px;width:1px;height:40px;background:#babfc6;"></div><div style="left:155px;top:444px;width:1px;height:261px;background:#c3c3c3;"></div><div style="left:260px;top:405px;width:1px;height:40px;background:#babfc6;"></div><div style="left:260px;top:444px;width:1px;height:261px;background:#c3c3c3;"></div><div style="left:347px;top:405px;width:1px;height:40px;background:#babfc6;"></div><div style="left:347px;top:444px;width:1px;height:261px;background:#c3c3c3;"></div><div style="left:385px;top:405px;width:1px;height:40px;background:#babfc6;"></div><div style="left:385px;top:444px;width:1px;height:261px;background:#c3c3c3;"></div><div style="left:524px;top:405px;width:1px;height:40px;background:#babfc6;"></div><div style="left:524px;top:444px;width:1px;height:261px;background:#c3c3c3;"></div><div style="left:567px;top:425px;width:1px;height:20px;background:#babfc6;"></div><div style="left:567px;top:444px;width:1px;height:261px;background:#c3c3c3;"></div><div style="left:659px;top:425px;width:1px;height:20px;background:#babfc6;"></div><div style="left:659px;top:444px;width:1px;height:261px;background:#c3c3c3;"></div><div style="left:703px;top:405px;width:1px;height:40px;background:#babfc6;"></div><div style="left:703px;top:444px;width:1px;height:261px;background:#c3c3c3;"></div><div style="left:771px;top:425px;width:1px;height:20px;background:#babfc6;"></div><div style="left:771px;top:444px;width:1px;height:261px;background:#c3c3c3;"></div><div style="left:826px;top:425px;width:1px;height:20px;background:#babfc6;"></div><div style="left:826px;top:444px;width:1px;height:261px;background:#c3c3c3;"></div><div style="left:896px;top:405px;width:1px;height:40px;background:#babfc6;"></div><div style="left:896px;top:444px;width:1px;height:261px;background:#c3c3c3;"></div><div style="left:933px;top:425px;width:1px;height:20px;background:#babfc6;"></div><div style="left:933px;top:444px;width:1px;height:261px;background:#c3c3c3;"></div><div style="left:970px;top:425px;width:1px;height:20px;background:#babfc6;"></div><div style="left:970px;top:444px;width:1px;height:261px;background:#c3c3c3;"></div><div style="left:1027px;top:405px;width:1px;height:325px;background:#babfc6;"></div><div style="left:0px;top:445px;width:1px;height:25px;background:#a4cfb3;"></div><div style="left:81px;top:445px;width:1px;height:25px;background:#9fc2aa;"></div><div style="left:0px;top:471px;width:1px;height:25px;background:#a4cfb3;"></div><div style="left:81px;top:471px;width:1px;height:25px;background:#9fc2aa;"></div><div style="left:1px;top:470px;width:80px;height:1px;background:#a4cfb3;"></div><div style="left:0px;top:497px;width:1px;height:25px;background:#ae73ea;"></div><div style="left:81px;top:497px;width:1px;height:25px;background:#a676d7;"></div><div style="left:1px;top:496px;width:80px;height:1px;background:#a9a1ce;"></div><div style="left:0px;top:523px;width:1px;height:25px;background:#799cc7;"></div><div style="left:81px;top:523px;width:1px;height:25px;background:#7b98bc;"></div><div style="left:1px;top:522px;width:80px;height:1px;background:#9388d8;"></div><div style="left:0px;top:549px;width:1px;height:25px;background:#a4cfb3;"></div><div style="left:81px;top:549px;width:1px;height:25px;background:#9fc2aa;"></div><div style="left:1px;top:548px;width:80px;height:1px;background:#8eb6bd;"></div><div style="left:0px;top:575px;width:1px;height:25px;background:#a4cfb3;"></div><div style="left:81px;top:575px;width:1px;height:25px;background:#9fc2aa;"></div><div style="left:1px;top:574px;width:80px;height:1px;background:#a4cfb3;"></div><div style="left:0px;top:601px;width:1px;height:25px;background:#ae73ea;"></div><div style="left:81px;top:601px;width:1px;height:25px;background:#a676d7;"></div><div style="left:1px;top:600px;width:80px;height:1px;background:#a9a1ce;"></div><div style="left:0px;top:627px;width:1px;height:25px;background:#a4cfb3;"></div><div style="left:81px;top:627px;width:1px;height:25px;background:#9fc2aa;"></div><div style="left:1px;top:626px;width:80px;height:1px;background:#a9a1ce;"></div><div style="left:0px;top:653px;width:1px;height:25px;background:#a4cfb3;"></div><div style="left:81px;top:653px;width:1px;height:25px;background:#9fc2aa;"></div><div style="left:1px;top:652px;width:80px;height:1px;background:#a4cfb3;"></div><div style="left:0px;top:679px;width:1px;height:25px;background:#ae73ea;"></div><div style="left:81px;top:679px;width:1px;height:25px;background:#a676d7;"></div><div style="left:1px;top:678px;width:80px;height:1px;background:#a9a1ce;"></div><div style="left:1px;top:704px;width:80px;height:1px;background:#ae73ea;"></div><div class="t " style="left:1px;top:407px;width:80px;height:38px;line-height:38px;"><span class="c">类型</span></div><div class="t " style="left:82px;top:407px;width:73px;height:38px;line-height:38px;"><span class="c">日期</span></div><div class="t " style="left:156px;top:407px;width:104px;height:38px;line-height:38px;"><span class="c">主场</span></div><div class="t " style="left:261px;top:407px;width:86px;height:38px;line-height:38px;"><span class="c">比分</span>(<span class="c">半场</span>)</div><div class="t " style="left:348px;top:407px;width:37px;height:38px;line-height:38px;"><span class="c">角球</span></div><div class="t " style="left:386px;top:407px;width:138px;height:38px;line-height:38px;"><span class="c">客场</span></div><div class="t " style="left:525px;top:427px;width:42px;height:18px;line-height:18px;"><span class="c">主</span></div><div class="t " style="left:568px;top:427px;width:91px;height:18px;line-height:18px;"><span class="c">让球</span></div><div class="t " style="left:660px;top:427px;width:43px;height:18px;line-height:18px;"><span class="c">客</span></div><div class="t " style="left:704px;top:427px;width:67px;height:18px;line-height:18px;"><span class="c">主</span></div><div class="t " style="left:772px;top:427px;width:54px;height:18px;line-height:18px;"><span class="c">和</span></div><div class="t " style="left:827px;top:427px;width:69px;height:18px;line-height:18px;"><span class="c">客</span></div><div class="t " style="left:897px;top:427px;width:36px;height:18px;line-height:18px;"><span class="c">胜负</span></div><div class="t " style="left:934px;top:427px;width:36px;height:18px;line-height:18px;"><span class="c">让球</span></div><div class="t " style="left:971px;top:427px;width:56px;height:18px;line-height:18px;"><span class="c">进球数</span></div><div class="t w" style="left:1px;top:446px;width:80px;height:25px;line-height:25px;color:#fff"><span class="c">苏超</span></div><div class="t " style="left:82px;top:446px;width:73px;height:25px;line-height:25px;">25-11-23</div><div class="t " style="left:156px;top:446px;width:104px;height:25px;line-height:25px;"><span class="c">圣米伦</span></div><div class="t " style="left:261px;top:446px;width:86px;height:25px;line-height:25px;"><span style="color:#cc1414">0-1</span>(0-0)</div><div class="t " style="left:348px;top:446px;width:37px;height:25px;line-height:25px;">2-4</div><div class="t " style="left:386px;top:446px;width:138px;height:25px;line-height:25px;"><span style="color:#18731d"><span class="c">凯尔特人</span></span></div><div class="t " style="left:525px;top:446px;width:42px;height:25px;line-height:25px;">0.91</div><div class="t " style="left:568px;top:446px;width:91px;height:25px;line-height:25px;"><span class="c">受一</span>/<span class="c">球半</span></div><div class="t " style="left:660px;top:446px;width:43px;height:25px;line-height:25px;">0.98</div><div class="t " style="left:704px;top:446px;width:67px;height:25px;line-height:25px;">6.49</div><div class="t " style="left:772px;top:446px;width:54px;height:25px;line-height:25px;">4.65</div><div class="t " style="left:827px;top:446px;width:69px;height:25px;line-height:25px;">1.42</div><div class="t " style="left:897px;top:446px;width:36px;height:25px;line-height:25px;"><span style="color:#cc1414"><span class="c">胜</span></span></div><div class="t " style="left:934px;top:446px;width:36px;height:25px;line-height:25px;"><span style="color:#0000a8"><span class="c">输</span></span></div><div class="t " style="left:971px;top:446px;width:56px;height:25px;line-height:25px;"><span style="color:#0000dd"><span class="c">小</span></span></div><div class="t w" style="left:1px;top:472px;width:80px;height:25px;line-height:25px;color:#fff"><span class="c">苏超</span></div><div class="t " style="left:82px;top:472px;width:73px;height:25px;line-height:25px;">25-11-10</div><div class="t " style="left:156px;top:472px;width:104px;height:25px;line-height:25px;"><span style="color:#18731d"><span class="c">凯尔特人</span></span></div><div class="t " style="left:261px;top:472px;width:86px;height:25px;line-height:25px;"><span style="color:#cc1414">4-0</span>(1-0)</div><div class="t " style="left:348px;top:472px;width:37px;height:25px;line-height:25px;">8-7</div><div class="t " style="left:386px;top:472px;width:138px;height:25px;line-height:25px;"><span class="c">基马诺克</span></div><div class="t " style="left:525px;top:472px;width:42px;height:25px;line-height:25px;">0.97</div><div class="t " style="left:568px;top:472px;width:91px;height:25px;line-height:25px;"><span class="c">两</span>/<span class="c">两球半</span></div><div class="t " style="left:660px;top:472px;width:43px;height:25px;line-height:25px;">0.91</div><div class="t " style="left:704px;top:472px;width:67px;height:25px;line-height:25px;">1.14</div><div class="t " style="left:772px;top:472px;width:54px;height:25px;line-height:25px;">7.82</div><div class="t " style="left:827px;top:472px;width:69px;height:25px;line-height:25px;">15.49</div><div class="t " style="left:897px;top:472px;width:36px;height:25px;line-height:25px;"><span style="color:#cc1414"><span class="c">胜</span></span></div><div class="t " style="left:934px;top:472px;width:36px;height:25px;line-height:25px;"><span style="color:#cc1414"><span class="c">赢</span></span></div><div class="t " style="left:971px;top:472px;width:56px;height:25px;line-height:25px;"><span style="color:#cc1414"><span class="c">大</span></span></div><div class="t w" style="left:1px;top:498px;width:80px;height:25px;line-height:25px;color:#fff"><span class="c">欧罗巴杯</span></div><div class="t " style="left:82px;top:498px;width:73px;height:25px;line-height:25px;">25-11-07</div><div class="t " style="left:156px;top:498px;width:104px;height:25px;line-height:25px;"><span class="c">中日德兰</span></div><div class="t " style="left:261px;top:498px;width:86px;height:25px;line-height:25px;"><span style="color:#cc1414">3-1</span>(3-0)</div><div class="t " style="left:348px;top:498px;width:37px;height:25px;line-height:25px;">4-4</div><div class="t " style="left:386px;top:498px;width:138px;height:25px;line-height:25px;"><span style="color:#18731d"><span class="c">凯尔特人</span></span></div><div class="t " style="left:525px;top:498px;width:42px;height:25px;line-height:25px;">0.96</div><div class="t " style="left:568px;top:498px;width:91px;height:25px;line-height:25px;"><span class="c">半球</span></div><div class="t " style="left:660px;top:498px;width:43px;height:25px;line-height:25px;">0.92</div><div class="t " style="left:704px;top:498px;width:67px;height:25px;line-height:25px;">1.96</div><div class="t " style="left:772px;top:498px;width:54px;height:25px;line-height:25px;">3.75</div><div class="t " style="left:827px;top:498px;width:69px;height:25px;line-height:25px;">3.56</div><div class="t " style="left:897px;top:498px;width:36px;height:25px;line-height:25px;"><span style="color:#0000dd"><span class="c">负</span></span></div><div class="t " style="left:934px;top:498px;width:36px;height:25px;line-height:25px;"><span style="color:#0000a8"><span class="c">输</span></span></div><div class="t " style="left:971px;top:498px;width:56px;height:25px;line-height:25px;"><span style="color:#cc1414"><span class="c">大</span></span></div><div class="t w" style="left:1px;top:524px;width:80px;height:25px;line-height:25px;color:#fff"><span class="c">苏联杯</span></div><div class="t " style="left:82px;top:524px;width:73px;height:25px;line-height:25px;">25-11-02</div><div class="t " style="left:156px;top:524px;width:104px;height:25px;line-height:25px;"><span style="color:#18731d"><span class="c">凯尔特人</span>(<span class="c">中</span>)</span></div><div class="t " style="left:261px;top:524px;width:86px;height:25px;line-height:25px;"><span style="color:#cc1414">1-1</span>(1-0)</div><div class="t " style="left:348px;top:524px;width:37px;height:25px;line-height:25px;">14-5</div><div class="t " style="left:386px;top:524px;width:138px;height:25px;line-height:25px;"><span class="c">格拉斯哥流浪者</span><span class="rc">1</span></div><div class="t " style="left:525px;top:524px;width:42px;height:25px;line-height:25px;">0.90</div><div class="t " style="left:568px;top:524px;width:91px;height:25px;line-height:25px;"><span class="c">半球</span></div><div class="t " style="left:660px;top:524px;width:43px;height:25px;line-height:25px;">0.98</div><div class="t " style="left:704px;top:524px;width:67px;height:25px;line-height:25px;">1.86</div><div class="t " style="left:772px;top:524px;width:54px;height:25px;line-height:25px;">3.68</div><div class="t " style="left:827px;top:524px;width:69px;height:25px;line-height:25px;">3.61</div><div class="t " style="left:897px;top:524px;width:36px;height:25px;line-height:25px;"><span style="color:#18731d"><span class="c">平</span></span></div><div class="t " style="left:934px;top:524px;width:36px;height:25px;line-height:25px;"><span style="color:#0000a8"><span class="c">输</span></span></div><div class="t " style="left:971px;top:524px;width:56px;height:25px;line-height:25px;"><span style="color:#0000dd"><span class="c">小</span></span></div><div class="t w" style="left:1px;top:550px;width:80px;height:25px;line-height:25px;color:#fff"><span class="c">苏超</span></div><div class="t " style="left:82px;top:550px;width:73px;height:25px;line-height:25px;">25-10-30</div><div class="t " style="left:156px;top:550px;width:104px;height:25px;line-height:25px;"><span style="color:#18731d"><span class="c">凯尔特人</span></span></div><div class="t " style="left:261px;top:550px;width:86px;height:25px;line-height:25px;"><span style="color:#cc1414">4-0</span>(2-0)</div><div class="t " style="left:348px;top:550px;width:37px;height:25px;line-height:25px;">6-3</div><div class="t " style="left:386px;top:550px;width:138px;height:25px;line-height:25px;"><span class="c">法基克</span></div><div class="t " style="left:525px;top:550px;width:42px;height:25px;line-height:25px;">0.99</div><div class="t " style="left:568px;top:550px;width:91px;height:25px;line-height:25px;"><span class="c">两</span>/<span class="c">两球半</span></div><div class="t " style="left:660px;top:550px;width:43px;height:25px;line-height:25px;">0.89</div><div class="t " style="left:704px;top:550px;width:67px;height:25px;line-height:25px;">1.18</div><div class="t " style="left:772px;top:550px;width:54px;height:25px;line-height:25px;">7.29</div><div class="t " style="left:827px;top:550px;width:69px;height:25px;line-height:25px;">11.98</div><div class="t " style="left:897px;top:550px;width:36px;height:25px;line-height:25px;"><span style="color:#cc1414"><span class="c">胜</span></span></div><div class="t " style="left:934px;top:550px;width:36px;height:25px;line-height:25px;"><span style="color:#cc1414"><span class="c">赢</span></span></div><div class="t " style="left:971px;top:550px;width:56px;height:25px;line-height:25px;"><span style="color:#cc1414"><span class="c">大</span></span></div><div class="t w" style="left:1px;top:576px;width:80px;height:25px;line-height:25px;color:#fff"><span class="c">苏超</span></div><div class="t " style="left:82px;top:576px;width:73px;height:25px;line-height:25px;">25-10-26</div><div class="t " style="left:156px;top:576px;width:104px;height:25px;line-height:25px;"><span class="c">哈茨</span></div><div class="t " style="left:261px;top:576px;width:86px;height:25px;line-height:25px;"><span style="color:#cc1414">3-1</span>(1-1)</div><div class="t " style="left:348px;top:576px;width:37px;height:25px;line-height:25px;">5-9</div><div class="t " style="left:386px;top:576px;width:138px;height:25px;line-height:25px;"><span style="color:#18731d"><span class="c">凯尔特人</span></span></div><div class="t " style="left:525px;top:576px;width:42px;height:25px;line-height:25px;">0.91</div><div class="t " style="left:568px;top:576px;width:91px;height:25px;line-height:25px;"><span class="c">受平</span>/<span class="c">半</span></div><div class="t " style="left:660px;top:576px;width:43px;height:25px;line-height:25px;">0.97</div><div class="t " style="left:704px;top:576px;width:67px;height:25px;line-height:25px;">3.09</div><div class="t " style="left:772px;top:576px;width:54px;height:25px;line-height:25px;">3.57</div><div class="t " style="left:827px;top:576px;width:69px;height:25px;line-height:25px;">2.14</div><div class="t " style="left:897px;top:576px;width:36px;height:25px;line-height:25px;"><span style="color:#0000dd"><span class="c">负</span></span></div><div class="t " style="left:934px;top:576px;width:36px;height:25px;line-height:25px;"><span style="color:#0000a8"><span class="c">输</span></span></div><div class="t " style="left:971px;top:576px;width:56px;height:25px;line-height:25px;"><span style="color:#cc1414"><span class="c">大</span></span></div><div class="t w" style="left:1px;top:602px;width:80px;height:25px;line-height:25px;color:#fff"><span class="c">欧罗巴杯</span></div><div class="t " style="left:82px;top:602px;width:73px;height:25px;line-height:25px;">25-10-24</div><div class="t " style="left:156px;top:602px;width:104px;height:25px;line-height:25px;"><span style="color:#18731d"><span class="c">凯尔特人</span></span></div><div class="t " style="left:261px;top:602px;width:86px;height:25px;line-height:25px;"><span style="color:#cc1414">2-1</span>(0-1)</div><div class="t " style="left:348px;top:602px;width:37px;height:25px;line-height:25px;">9-2</div><div class="t " style="left:386px;top:602px;width:138px;height:25px;line-height:25px;"><span class="c">格拉茨风暴</span><span class="rc">1</span></div><div class="t " style="left:525px;top:602px;width:42px;height:25px;line-height:25px;">0.84</div><div class="t " style="left:568px;top:602px;width:91px;height:25px;line-height:25px;"><span class="c">一</span>/<span class="c">球半</span></div><div class="t " style="left:660px;top:602px;width:43px;height:25px;line-height:25px;">1.04</div><div class="t " style="left:704px;top:602px;width:67px;height:25px;line-height:25px;">1.43</div><div class="t " style="left:772px;top:602px;width:54px;height:25px;line-height:25px;">4.81</div><div class="t " style="left:827px;top:602px;width:69px;height:25px;line-height:25px;">6.60</div><div class="t " style="left:897px;top:602px;width:36px;height:25px;line-height:25px;"><span style="color:#cc1414"><span class="c">胜</span></span></div><div class="t " style="left:934px;top:602px;width:36px;height:25px;line-height:25px;"><span style="color:#0000a8"><span class="c">输</span></span></div><div class="t " style="left:971px;top:602px;width:56px;height:25px;line-height:25px;"><span style="color:#18731d"><span class="c">走</span></span></div><div class="t w" style="left:1px;top:628px;width:80px;height:25px;line-height:25px;color:#fff"><span class="c">苏超</span></div><div class="t " style="left:82px;top:628px;width:73px;height:25px;line-height:25px;">25-10-19</div><div class="t " style="left:156px;top:628px;width:104px;height:25px;line-height:25px;"><span class="c">邓迪</span>FC</div><div class="t " style="left:261px;top:628px;width:86px;height:25px;line-height:25px;"><span style="color:#cc1414">2-0</span>(2-0)</div><div class="t " style="left:348px;top:628px;width:37px;height:25px;line-height:25px;">2-12</div><div class="t " style="left:386px;top:628px;width:138px;height:25px;line-height:25px;"><span style="color:#18731d"><span class="c">凯尔特人</span></span></div><div class="t " style="left:525px;top:628px;width:42px;height:25px;line-height:25px;">1.02</div><div class="t " style="left:568px;top:628px;width:91px;height:25px;line-height:25px;"><span class="c">受两球</span></div><div class="t " style="left:660px;top:628px;width:43px;height:25px;line-height:25px;">0.86</div><div class="t " style="left:704px;top:628px;width:67px;height:25px;line-height:25px;">12.93</div><div class="t " style="left:772px;top:628px;width:54px;height:25px;line-height:25px;">6.99</div><div class="t " style="left:827px;top:628px;width:69px;height:25px;line-height:25px;">1.18</div><div class="t " style="left:897px;top:628px;width:36px;height:25px;line-height:25px;"><span style="color:#0000dd"><span class="c">负</span></span></div><div class="t " style="left:934px;top:628px;width:36px;height:25px;line-height:25px;"><span style="color:#0000a8"><span class="c">输</span></span></div><div class="t " style="left:971px;top:628px;width:56px;height:25px;line-height:25px;"><span style="color:#0000dd"><span class="c">小</span></span></div><div class="t w" style="left:1px;top:654px;width:80px;height:25px;line-height:25px;color:#fff"><span class="c">苏超</span></div><div class="t " style="left:82px;top:654px;width:73px;height:25px;line-height:25px;">25-10-05</div><div class="t " style="left:156px;top:654px;width:104px;height:25px;line-height:25px;"><span style="color:#18731d"><span class="c">凯尔特人</span></span></div><div class="t " style="left:261px;top:654px;width:86px;height:25px;line-height:25px;"><span style="color:#cc1414">3-2</span>(1-1)</div><div class="t " style="left:348px;top:654px;width:37px;height:25px;line-height:25px;">10-0</div><div class="t " style="left:386px;top:654px;width:138px;height:25px;line-height:25px;"><span class="c">马瑟韦尔</span></div><div class="t " style="left:525px;top:654px;width:42px;height:25px;line-height:25px;">0.98</div><div class="t " style="left:568px;top:654px;width:91px;height:25px;line-height:25px;"><span class="c">两球</span></div><div class="t " style="left:660px;top:654px;width:43px;height:25px;line-height:25px;">0.90</div><div class="t " style="left:704px;top:654px;width:67px;height:25px;line-height:25px;">1.19</div><div class="t " style="left:772px;top:654px;width:54px;height:25px;line-height:25px;">6.97</div><div class="t " style="left:827px;top:654px;width:69px;height:25px;line-height:25px;">11.71</div><div class="t " style="left:897px;top:654px;width:36px;height:25px;line-height:25px;"><span style="color:#cc1414"><span class="c">胜</span></span></div><div class="t " style="left:934px;top:654px;width:36px;height:25px;line-height:25px;"><span style="color:#0000a8"><span class="c">输</span></span></div><div class="t " style="left:971px;top:654px;width:56px;height:25px;line-height:25px;"><span style="color:#cc1414"><span class="c">大</span></span></div><div class="t w" style="left:1px;top:680px;width:80px;height:25px;line-height:25px;color:#fff"><span class="c">欧罗巴杯</span></div><div class="t " style="left:82px;top:680px;width:73px;height:25px;line-height:25px;">25-10-03</div><div class="t " style="left:156px;top:680px;width:104px;height:25px;line-height:25px;"><span style="color:#18731d"><span class="c">凯尔特人</span></span></div><div class="t " style="left:261px;top:680px;width:86px;height:25px;line-height:25px;"><span style="color:#cc1414">0-2</span>(0-1)</div><div class="t " style="left:348px;top:680px;width:37px;height:25px;line-height:25px;">7-5</div><div class="t " style="left:386px;top:680px;width:138px;height:25px;line-height:25px;"><span class="c">布拉加</span></div><div class="t " style="left:525px;top:680px;width:42px;height:25px;line-height:25px;">0.78</div><div class="t " style="left:568px;top:680px;width:91px;height:25px;line-height:25px;"><span class="c">半</span>/<span class="c">一</span></div><div class="t " style="left:660px;top:680px;width:43px;height:25px;line-height:25px;">1.11</div><div class="t " style="left:704px;top:680px;width:67px;height:25px;line-height:25px;">1.69</div><div class="t " style="left:772px;top:680px;width:54px;height:25px;line-height:25px;">3.91</div><div class="t " style="left:827px;top:680px;width:69px;height:25px;line-height:25px;">4.84</div><div class="t " style="left:897px;top:680px;width:36px;height:25px;line-height:25px;"><span style="color:#0000dd"><span class="c">负</span></span></div><div class="t " style="left:934px;top:680px;width:36px;height:25px;line-height:25px;"><span style="color:#0000a8"><span class="c">输</span></span></div><div class="t " style="left:971px;top:680px;width:56px;height:25px;line-height:25px;"><span style="color:#0000dd"><span class="c">小</span></span></div><div class="t " style="left:1px;top:706px;width:1026px;height:25px;line-height:25px;letter-spacing:0.18px"><span class="c">近</span><span style="color:#cc1414">10</span><span class="c">场</span>,<span class="c">胜</span>5<span class="c">平</span>1<span class="c">负</span>4, <span class="c">胜率</span>:<span style="color:#cc1414">50%</span> <span class="c">让胜率</span>:<span style="color:#cc1414">20%</span> <span class="c">大率</span>:<span style="color:#cc1414">50%</span> <span class="c">单率</span>:<span style="color:#cc1414">30%</span></div></body></html>
